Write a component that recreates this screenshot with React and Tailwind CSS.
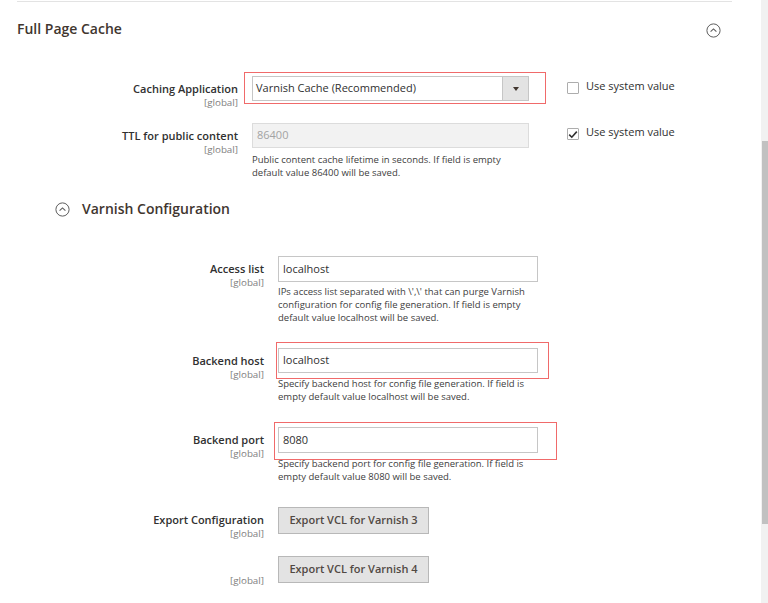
import React from 'react';

const FONT = { fontFamily: '"Open Sans", "Liberation Sans", Arial, sans-serif' };

const CollapseIcon = () => (
    <svg width="15" height="15" viewBox="0 0 15 15" className="shrink-0">
        <circle cx="7.5" cy="7.5" r="6.6" fill="none" stroke="#5e5e5e" strokeWidth="1" />
        <polyline points="4.6,8.7 7.5,5.9 10.4,8.7" fill="none" stroke="#5e5e5e" strokeWidth="1.1" />
    </svg>
);

const Checkbox = ({ checked }) => (
    <span className="mt-[4px] flex h-[12px] w-[12px] shrink-0 items-center justify-center rounded-[1px] border border-[#adadad] bg-white">
        {checked && (
            <svg width="10" height="9" viewBox="0 0 10 9">
                <polyline points="1.2,4.6 3.8,7.2 8.8,1.6" fill="none" stroke="#303030" strokeWidth="1.6" />
            </svg>
        )}
    </span>
);

const SystemValue = ({ checked, className }) => (
    <div className={`ml-[38px] flex items-start gap-[7px] ${className}`}>
        <Checkbox checked={checked} />
        <span className="text-[11px] leading-[15px] text-[#303030]">Use system value</span>
    </div>
);

// red annotation box drawn over a field
const Mark = ({ className }) => (
    <span className={`pointer-events-none absolute border border-[#f06a6a] ${className}`} />
);

const Label = ({ width, text, pad = 'pt-[5px]' }) => (
    <div className={`${width} shrink-0 text-right ${pad}`}>
        {text && <div className="text-[11px] font-semibold leading-[15px] text-[#303030]">{text}</div>}
        <div className="mt-px text-[9.8px] leading-[12px] text-[#808080]">[global]</div>
    </div>
);

const Help = ({ lines, className = 'mt-[4px]' }) => (
    <div className={`${className} text-[9.5px] leading-[13px] text-[#404040]`}>
        {lines.map((l) => (
            <div key={l} className="whitespace-nowrap">{l}</div>
        ))}
    </div>
);

const TextInput = ({ value, h = 'h-[26px]' }) => (
    <div className={`${h} flex w-[260px] items-center border border-[#c6c6c6] bg-white px-[4px] text-[11px] text-[#303030]`}>
        {value}
    </div>
);

const ExportButton = ({ text }) => (
    <div className="flex h-[27px] w-[151px] items-center justify-center border border-[#b8b8b8] bg-[#e3e3e3] text-[11px] font-semibold text-[#514943]">
        {text}
    </div>
);

export default function App() {
    return (
        <div className="flex h-[603px] w-[768px] overflow-hidden bg-white" style={FONT}>
            <div className="w-[761px] shrink-0">
                <div className="ml-[17px] mt-px h-px w-[715px] bg-[#e3e3e3]" />

                <div className="ml-[17px] mt-[17px] flex w-[704px] items-center justify-between">
                    <h2 className="text-[14px] font-semibold leading-[20px] text-[#41362f]">Full Page Cache</h2>
                    <div className="mt-[2px]"><CollapseIcon /></div>
                </div>

                {/* Caching Application */}
                <div className="mt-[37px] flex items-start">
                    <Label width="w-[238px]" text="Caching Application" />
                    <div className="relative ml-[14px] w-[277px]">
                        <div className="flex h-[25px] items-stretch border border-[#c6c6c6] bg-white">
                            <div className="flex flex-1 items-center pl-[3px] text-[11px] text-[#303030]">Varnish Cache (Recommended)</div>
                            <div className="flex w-[26px] items-center justify-center border-l border-[#c6c6c6] bg-[#e3e3e3]">
                                <svg width="6" height="4" viewBox="0 0 6 4">
                                    <polygon points="0,0 6,0 3,4" fill="#41362f" />
                                </svg>
                            </div>
                        </div>
                        <Mark className="left-[-8px] top-[-4px] right-[-17px] bottom-[-3px]" />
                    </div>
                    <SystemValue className="mt-[2px]" />
                </div>

                {/* TTL */}
                <div className="mt-[14px] flex items-start">
                    <Label width="w-[238px]" text="TTL for public content" />
                    <div className="ml-[14px] w-[277px]">
                        <div className="flex h-[25px] items-center border border-[#dcdcdc] bg-[#f2f2f2] px-[4px] text-[11px] text-[#a3a3a3]">86400</div>
                        <Help className="mt-[5px]" lines={['Public content cache lifetime in seconds. If field is empty', 'default value 86400 will be saved.']} />
                    </div>
                    <SystemValue checked className="mt-[1px]" />
                </div>

                <div className="ml-[55px] mt-[20px] flex items-center gap-[12px]">
                    <CollapseIcon />
                    <h3 className="text-[14px] font-semibold leading-[20px] text-[#41362f]">Varnish Configuration</h3>
                </div>

                {/* Access list */}
                <div className="mt-[37px] flex items-start">
                    <Label width="w-[264px]" text="Access list" />
                    <div className="ml-[14px]">
                        <TextInput value="localhost" />
                        <Help className="mt-[3px]" lines={["IPs access list separated with \\',\\' that can purge Varnish", 'configuration for config file generation. If field is empty', 'default value localhost will be saved.']} />
                    </div>
                </div>

                {/* Backend host */}
                <div className="mt-[24px] flex items-start">
                    <Label width="w-[264px]" text="Backend host" />
                    <div className="ml-[14px]">
                        <div className="relative">
                            <TextInput value="localhost" h="h-[25px]" />
                            <Mark className="left-[-2px] top-[-6px] right-[-11px] bottom-[-6px]" />
                        </div>
                        <Help lines={['Specify backend host for config file generation. If field is', 'empty default value localhost will be saved.']} />
                    </div>
                </div>

                {/* Backend port */}
                <div className="mt-[24px] flex items-start">
                    <Label width="w-[264px]" text="Backend port" />
                    <div className="ml-[14px]">
                        <div className="relative">
                            <TextInput value="8080" />
                            <Mark className="left-[-4px] top-[-5px] right-[-19px] bottom-[-7px]" />
                        </div>
                        <Help lines={['Specify backend port for config file generation. If field is', 'empty default value 8080 will be saved.']} />
                    </div>
                </div>

                {/* Export */}
                <div className="mt-[24px] flex items-start">
                    <Label width="w-[264px]" text="Export Configuration" pad="pt-[5px]" />
                    <div className="ml-[14px]">
                        <ExportButton text="Export VCL for Varnish 3" />
                    </div>
                </div>

                <div className="mt-[16px] flex items-start">
                    <Label width="w-[264px]" pad="pt-[18px]" />
                    <div className="ml-[14px]">
                        <ExportButton text="Export VCL for Varnish 4" />
                    </div>
                </div>
            </div>

            {/* scrollbar */}
            <div className="flex w-[7px] shrink-0 flex-col bg-[#f1f1f1]">
                <div className="h-[141px]" />
                <div className="ml-px h-[383px] bg-[#c1c1c1]" />
            </div>
        </div>
    );
}
